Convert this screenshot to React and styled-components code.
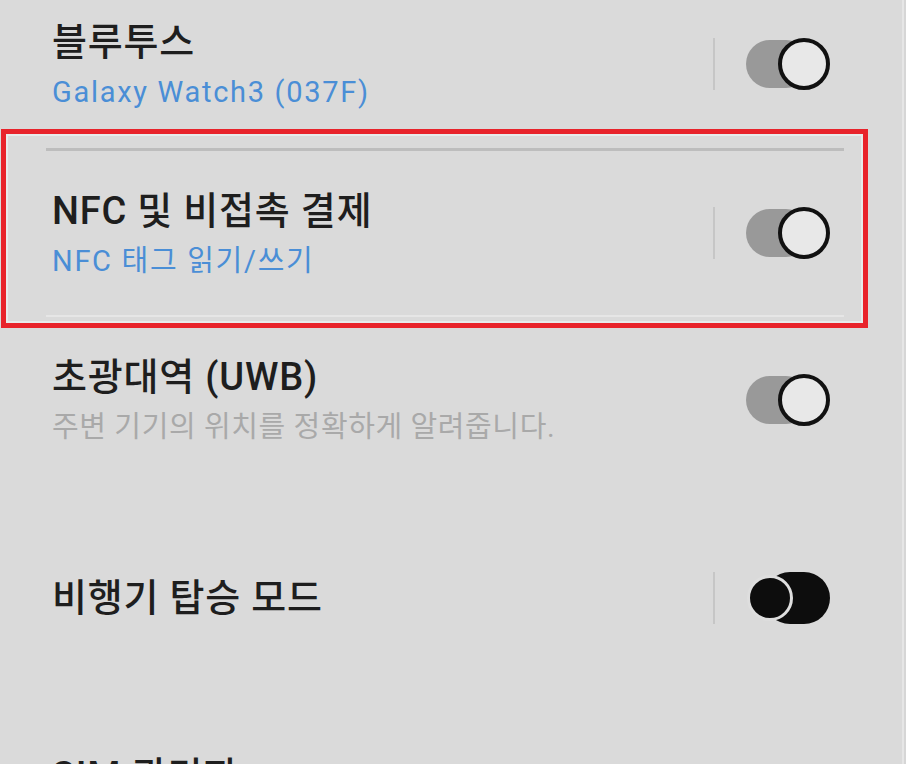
import React from "react";
import styled, { createGlobalStyle } from "styled-components";

const Global = createGlobalStyle`
  html, body { margin: 0; padding: 0; background: #d6d6d6; }
  body { width: 906px; height: 764px; overflow: hidden; }
  #root { width: 906px; }
`;

const Screen = styled.div`
  position: relative;
  width: 902px;
  height: 764px;
  overflow: hidden;
  background: #dadada;
  border-right: 2px solid #e6e6e6;
  font-family: "Roboto", "Noto Sans CJK KR", sans-serif;
`;

const List = styled.div`
  display: flex;
  flex-direction: column;
  padding: 0 58px 0 46px;
`;

const Row = styled.div`
  display: flex;
  align-items: center;
  box-sizing: border-box;
  height: ${(p) => p.$h}px;
  padding: 0 14px ${(p) => p.$pb || 0}px 6px;
  border-top: ${(p) => (p.$topLine ? "3px solid #bdbdbd" : "none")};
  border-bottom: ${(p) => (p.$bottomLine ? "2px solid #e6e6e6" : "none")};
  flex-shrink: 0;
`;

const TextBlock = styled.div`
  flex: 1;
  display: flex;
  flex-direction: column;
  gap: 11px;
`;

const Title = styled.div`
  font-family: "Roboto", "Noto Sans CJK KR", sans-serif;
  font-size: 38px;
  font-weight: 500;
  letter-spacing: 0.8px;
  line-height: 44px;
  color: #1e1e1e;
  white-space: nowrap;
`;

const Sub = styled.div`
  font-family: "Roboto", "Noto Sans CJK KR", sans-serif;
  font-size: 29px;
  line-height: 34px;
  letter-spacing: ${(p) => (p.$muted ? "0.6px" : "1.7px")};
  color: ${(p) => (p.$muted ? "#a9a9a9" : "#4a8ed6")};
  white-space: nowrap;
`;

const Divider = styled.div`
  width: 2px;
  height: 52px;
  background: #c6c6c6;
  margin-right: 31px;
  visibility: ${(p) => (p.$hidden ? "hidden" : "visible")};
`;

const Switch = styled.div`
  position: relative;
  width: 84px;
  height: 52px;
  flex-shrink: 0;
`;

const Track = styled.div`
  position: absolute;
  top: ${(p) => (p.$on ? 2 : 0)}px;
  bottom: ${(p) => (p.$on ? 2 : 0)}px;
  left: ${(p) => (p.$on ? 0 : 18)}px;
  right: ${(p) => (p.$on ? 20 : 0)}px;
  border-radius: 26px;
  background: ${(p) => (p.$on ? "#999999" : "#0d0d0d")};
`;

const Thumb = styled.div`
  position: absolute;
  box-sizing: border-box;
  top: 50%;
  transform: translateY(-50%);
  border-radius: 50%;
  ${(p) =>
    p.$on
      ? `right: 0; width: 52px; height: 52px; background: #e8e8e8; border: 4.5px solid #111;`
      : `left: 1px; width: 46px; height: 46px; background: #0d0d0d; border: 3px solid #dedede;`}
`;

const Highlight = styled.div`
  position: absolute;
  left: 1px;
  top: 129px;
  width: 867px;
  height: 199px;
  box-sizing: border-box;
  border: 5px solid #e8232b;
  box-shadow: inset 0 0 0 2px rgba(236, 242, 242, 0.7);
  pointer-events: none;
`;

function Toggle({ on, hideDivider }) {
  return (
    <>
      <Divider $hidden={hideDivider} />
      <Switch>
        <Track $on={on} />
        <Thumb $on={on} />
      </Switch>
    </>
  );
}

export default function App() {
  return (
    <>
      <Global />
      <Screen>
        <List>
          <Row $h={148} $pb={20}>
            <TextBlock>
              <Title>블루투스</Title>
              <Sub>Galaxy Watch3 (037F)</Sub>
            </TextBlock>
            <Toggle on />
          </Row>
          <Row $h={169} $topLine $bottomLine>
            <TextBlock>
              <Title>NFC 및 비접촉 결제</Title>
              <Sub>NFC 태그 읽기/쓰기</Sub>
            </TextBlock>
            <Toggle on />
          </Row>
          <Row $h={165}>
            <TextBlock>
              <Title>초광대역 (UWB)</Title>
              <Sub $muted>주변 기기의 위치를 정확하게 알려줍니다.</Sub>
            </TextBlock>
            <Toggle on hideDivider />
          </Row>
          <Row $h={232}>
            <TextBlock>
              <Title>비행기 탑승 모드</Title>
            </TextBlock>
            <Toggle on={false} />
          </Row>
          <Row $h={124}>
            <TextBlock>
              <Title>SIM 관리자</Title>
            </TextBlock>
          </Row>
        </List>
        <Highlight />
      </Screen>
    </>
  );
}
